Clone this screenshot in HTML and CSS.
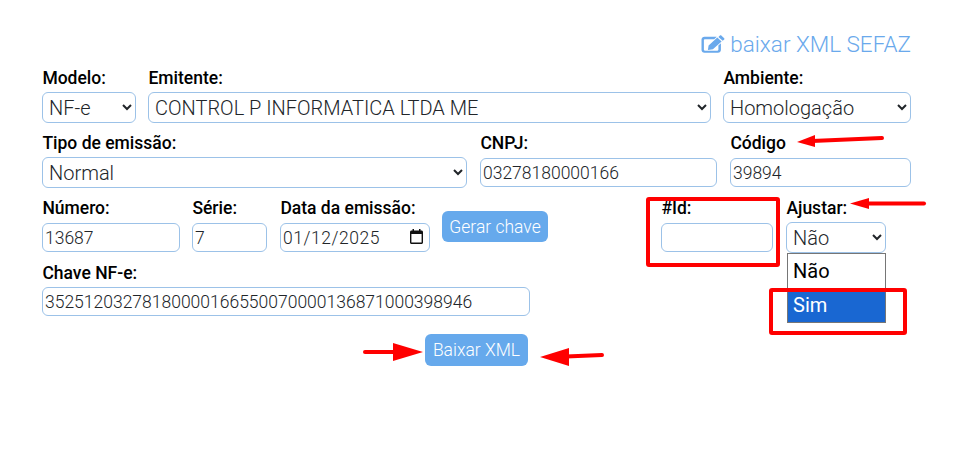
FILE: index.html
```html
<!DOCTYPE html>
<html lang="pt-BR">
<head>
    <meta charset="UTF-8">
    <title>Baixar XML SEFAZ</title>
    <link rel="stylesheet" href="styles.css">
</head>
<body>
    <div class="page">
        <a class="sefaz-link" href="#">
            <svg class="edit-icon" viewBox="0 0 24 20" preserveAspectRatio="none" aria-hidden="true">
                <path d="M3.500 2h12.300l-2.600 2.600H3.800c-.5 0-.9.4-.9.9v11c0 .5.4.9.9.9h12.700c.5 0 .9-.4.9-.9v-4.800l2.500-2.500v7.600c0 1.700-1.300 3-3 3H3.500c-1.700 0-3-1.300-3-3V5c0-1.700 1.300-3 3-3z"/>
                <path d="M20.300.6l2.900 2.900c.4.400.4 1 0 1.400l-1.500 1.500-4.300-4.300 1.500-1.500c.4-.4 1-.4 1.400 0zM16.300 2.900l4.300 4.300-8.700 8.700-5 .7.700-5z"/>
            </svg>
            baixar XML SEFAZ
        </a>

        <div class="row row-one">
            <div class="field modelo">
                <label for="modelo">Modelo:</label>
                <select id="modelo"><option>NF-e</option></select>
            </div>
            <div class="field grow">
                <label for="emitente">Emitente:</label>
                <select id="emitente"><option>CONTROL P INFORMATICA LTDA ME</option></select>
            </div>
            <div class="field ambiente">
                <label for="ambiente">Ambiente:</label>
                <select id="ambiente"><option>Homologação</option></select>
            </div>
        </div>

        <div class="row">
            <div class="field tipo">
                <label for="tipo">Tipo de emissão:</label>
                <select id="tipo"><option>Normal</option></select>
            </div>
            <div class="field cnpj">
                <label for="cnpj">CNPJ:</label>
                <input type="text" id="cnpj" value="03278180000166">
            </div>
            <div class="field codigo">
                <label for="codigo">Código</label>
                <input type="text" id="codigo" value="39894">
            </div>
        </div>

        <div class="row">
            <div class="field numero">
                <label for="numero">Número:</label>
                <input type="text" id="numero" value="13687">
            </div>
            <div class="field serie">
                <label for="serie">Série:</label>
                <input type="text" id="serie" value="7">
            </div>
            <div class="field data">
                <label for="data">Data da emissão:</label>
                <input type="text" id="data" value="01/12/2025">
                <svg class="calendar-icon" viewBox="0 0 13 15" aria-hidden="true">
                    <path d="M2.500 0h1.500v1.500h5V0h1.500v1.500h1c.8 0 1.500.7 1.500 1.500v10.500c0 .8-.7 1.500-1.500 1.500h-10C.7 15 0 14.300 0 13.500V3c0-.8.7-1.500 1.500-1.500h1zM1.400 5v8.600h10.200V5z"/>
                </svg>
            </div>
            <button class="btn gerar" type="button">Gerar chave</button>
            <div class="field id-field">
                <label for="id-nf">#Id:</label>
                <input type="text" id="id-nf">
            </div>
            <div class="field ajustar">
                <label for="ajustar">Ajustar:</label>
                <select id="ajustar"><option>Não</option><option>Sim</option></select>
                <ul class="dropdown">
                    <li>Não</li>
                    <li class="selected">Sim</li>
                </ul>
            </div>
        </div>

        <div class="row">
            <div class="field chave">
                <label for="chave">Chave NF-e:</label>
                <input type="text" id="chave" value="35251203278180000166550070000136871000398946">
            </div>
        </div>

        <div class="actions">
            <button class="btn baixar" type="button">Baixar XML</button>
        </div>
    </div>

    <!-- marcacoes vermelhas por cima da tela -->
    <svg class="marks" width="979" height="471" aria-hidden="true">
        <rect x="648" y="199" width="130" height="66" rx="1"/>
        <rect x="771" y="290" width="134" height="43" rx="1"/>
        <path class="line" d="M812 141L882 138"/>
        <path class="head" d="M797 142L815 135L815 147z"/>
        <path class="line" d="M866 203.500L924 203.500"/>
        <path class="head" d="M850 203.500L869 198L869 209z"/>
        <path class="line" d="M365 352L396 352"/>
        <path class="head" d="M423 352L393 343L393 361z"/>
        <path class="line" d="M566 356.500L602 355"/>
        <path class="head" d="M540 357L569 348L569 366z"/>
    </svg>
</body>
</html>
```

FILE: styles.css
```css
body {
    margin: 0;
    background-color: #fff;
    color: #212529;
    font-family: Roboto, "Liberation Sans", sans-serif;
    font-weight: 300;
}

.page {
    width: 869px;
    margin-left: 42px;
    padding-top: 29px;
}

.sefaz-link {
    display: flex;
    justify-content: flex-end;
    align-items: center;
    gap: 5px;
    height: 30px;
    margin-bottom: 7px;
    color: #6aa9ec;
    font-size: 22.5px;
    text-decoration: none;
}

.edit-icon {
    width: 24px;
    height: 18px;
    margin-top: -1px;
    fill: #6aa9ec;
}

.row {
    display: flex;
    margin-bottom: 8px;
}

.row-one {
    gap: 12px;
}

.field {
    display: flex;
    flex-direction: column;
    position: relative;
}

.field label {
    height: 26px;
    padding-left: 0.4px;
    color: #000;
    font-size: 17.5px;
    font-weight: 500;
    line-height: 24px;
    white-space: nowrap;
}

select,
input {
    box-sizing: border-box;
    width: 100%;
    background-color: #fff;
    border: 1px solid #9cc2e8;
    border-radius: 6px;
    color: #212529;
    font-family: inherit;
    font-weight: 300;
}

select {
    height: 31px;
    padding: 0 2px;
    font-size: 20px;
}

input {
    height: 29px;
    margin: 1px 0;
    padding: 0 1px 0 2px;
    font-size: 17.5px;
}

.modelo { width: 94px; }
.grow { flex: 1; }
.ambiente { width: 188px; }

.tipo { width: 425px; margin-right: 13px; }
.cnpj { width: 237px; margin-right: 13px; }
.codigo { width: 181px; }

.numero { width: 138px; margin-right: 12px; }
.serie { width: 75px; margin-right: 13px; }
.data { width: 150px; margin-right: 12px; }
.data input { letter-spacing: 0.55px; }
.id-field { width: 112px; margin-left: 113px; margin-right: 13px; }
.ajustar { width: 100px; }

.chave { width: 488px; }
.chave input { margin: 0; }

.calendar-icon {
    position: absolute;
    top: 33px;
    right: 7px;
    width: 13px;
    height: 15px;
    fill: #111;
}

.btn {
    border: none;
    border-radius: 6px;
    background-color: #66a9ec;
    color: #fff;
    font-family: inherit;
    font-size: 17.5px;
    font-weight: 300;
    padding: 0;
}

.gerar {
    align-self: flex-start;
    width: 106px;
    height: 31px;
    margin-top: 15px;
}

.actions {
    display: flex;
    margin-top: 18px;
    margin-left: 383px;
}

.baixar {
    width: 103px;
    height: 32px;
}

.dropdown {
    position: absolute;
    top: 57px;
    left: 1px;
    width: 99px;
    height: 70px;
    margin: 0;
    padding: 0;
    box-sizing: border-box;
    list-style: none;
    background-color: #fff;
    border: 1px solid #767676;
    color: #000;
    font-size: 20px;
    font-weight: 400;
}

.dropdown li {
    height: 34px;
    padding-left: 5px;
    line-height: 34px;
}

.dropdown .selected {
    background-color: #1967d2;
    color: #fff;
}

.marks {
    position: absolute;
    top: 0;
    left: 0;
    fill: none;
    pointer-events: none;
}

.marks rect {
    stroke: #f00;
    stroke-width: 4;
}

.marks .line {
    stroke: #f00;
    stroke-width: 4;
    stroke-linecap: round;
}

.marks .head {
    fill: #f00;
}
```
